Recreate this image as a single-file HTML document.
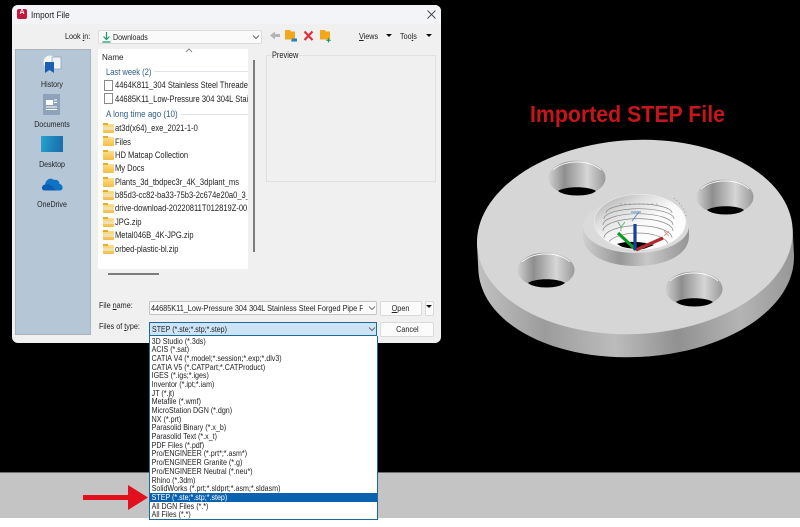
<!DOCTYPE html>
<html><head><meta charset="utf-8"><style>
html,body{margin:0;padding:0;background:#000;width:800px;height:527px;overflow:hidden}
body{position:relative;font-family:"Liberation Sans",sans-serif;color:#222;filter:blur(.3px)}
.a{position:absolute}
.t{position:absolute;white-space:nowrap;font-size:8.6px;line-height:12px;height:12px;transform:scaleX(.84);transform-origin:0 50%}
.c{text-align:center;width:74px;left:15px;font-size:8.4px;transform-origin:50% 50%}
.f{left:115px;width:158px;overflow:hidden;font-size:9px}
.fd{position:absolute;left:103px;width:11px;height:9px;background:linear-gradient(#fde08a,#f3bd45);border-radius:1px}
.fd:before{content:"";position:absolute;left:0;top:-1px;width:5px;height:2px;background:#e8a92f}
.z:after{content:"";position:absolute;left:0;right:0;top:3px;height:3px;background:#ece4c8;opacity:.8}
.doc{position:absolute;left:104px;width:7px;height:9px;border:1px solid #8a8a8a;background:#fff}
.b{position:absolute;background:#fbfbfb;border:1px solid #d9d9d9;border-radius:2px;text-align:center;font-size:8.6px;line-height:13px}
.b span{display:inline-block;transform:scaleX(.84)}
#dd{overflow:hidden;padding-top:.5px}
#dd div{height:8.7px;line-height:8.7px;padding-left:2px;font-size:8.55px;white-space:nowrap;width:276px;transform:scaleX(.83);transform-origin:0 0;box-sizing:border-box}
</style></head><body>
<div class="a" style="left:0;top:472px;width:800px;height:46px;background:#c4c4c4;border-top:1px solid #6e6e6e;box-sizing:border-box"></div>
<div class="a" style="left:0;top:518px;width:800px;height:9px;background:#fff"></div>

<svg class="a" style="left:0;top:0" width="800" height="527" viewBox="0 0 800 527">
<defs>
<linearGradient id="side" x1="0" x2="1" y1="0" y2="0"><stop offset="0" stop-color="#c0c0c0"/><stop offset=".2" stop-color="#9c9c9c"/><stop offset=".42" stop-color="#bcbcbc"/><stop offset=".62" stop-color="#919191"/><stop offset=".82" stop-color="#b4b4b4"/><stop offset="1" stop-color="#979797"/></linearGradient>
<linearGradient id="hole" x1="0" x2="1" y1="0" y2="0"><stop offset="0" stop-color="#d0d0d0"/><stop offset=".28" stop-color="#8e8e8e"/><stop offset=".68" stop-color="#d6d6d6"/><stop offset="1" stop-color="#999"/></linearGradient>
<linearGradient id="hub" x1="0" x2="1" y1="0" y2="0"><stop offset="0" stop-color="#cfcfcf"/><stop offset=".35" stop-color="#979797"/><stop offset=".6" stop-color="#c8c8c8"/><stop offset="1" stop-color="#949494"/></linearGradient>
<linearGradient id="bore" x1="0" x2=".9" y1="0" y2="1"><stop offset="0" stop-color="#a4a4a4"/><stop offset=".3" stop-color="#dcdcdc"/><stop offset=".55" stop-color="#fafafa"/><stop offset="1" stop-color="#fff"/></linearGradient>
<clipPath id="bc"><ellipse cx="640" cy="222" rx="45" ry="27"/></clipPath>
</defs>
<text x="530" y="122" fill="#c8141c" font-family="Liberation Sans,sans-serif" font-size="23" font-weight="bold" textLength="195" lengthAdjust="spacingAndGlyphs">Imported STEP File</text>

<g transform="rotate(-3 635 240)">
<path d="M477 237V262C477 316 548 357 635 357S793 316 793 262V237Z" fill="url(#side)"/>
<ellipse cx="635" cy="237" rx="158" ry="97" fill="#d6d6d6"/>
</g>
<g id="holes">
<g><ellipse cx="577" cy="178" rx="28.500" ry="17.500" fill="url(#hole)"/><path d="M558 191C565 186 589 186 596 191C590 197 565 197 558 191Z" fill="#000"/><path d="M553 170A28.500 17.500 0 0 1 601 170" stroke="#fff" stroke-width=".8" fill="none"/></g>
<g><ellipse cx="725" cy="197" rx="28.500" ry="17.500" fill="url(#hole)"/><path d="M707 210C714 205 738 205 744 210C738 216 714 216 707 210Z" fill="#000"/><path d="M701 189A28.500 17.500 0 0 1 749 189" stroke="#fff" stroke-width=".8" fill="none"/></g>
<g><ellipse cx="546" cy="270" rx="28.500" ry="17.500" fill="url(#hole)"/><path d="M528 283C535 278 558 278 565 283C558 289 535 289 528 283Z" fill="#000"/><path d="M522 262A28.500 17.500 0 0 1 570 262" stroke="#fff" stroke-width=".8" fill="none"/></g>
<g><ellipse cx="694" cy="289" rx="28.500" ry="17.500" fill="url(#hole)"/><path d="M676 302C683 297 706 297 713 302C706 308 683 308 676 302Z" fill="#000"/><path d="M670 281A28.500 17.500 0 0 1 718 281" stroke="#fff" stroke-width=".8" fill="none"/></g>
</g>
<path d="M583 226V236C583 255 607 266 636 266S689 255 689 236V226Z" fill="url(#hub)"/>
<ellipse cx="636" cy="226" rx="53" ry="27" fill="#dadada"/>
<ellipse cx="640" cy="222" rx="46" ry="28" fill="#f0f0f0"/>
<ellipse cx="640" cy="222" rx="45.500" ry="27.500" fill="url(#bore)"/>
<g clip-path="url(#bc)" fill="none" stroke="#8a8a8a" stroke-width=".7">
<path d="M606 213A33 9 0 0 1 672 213M604 219A34 10 0 0 1 674 219M603 225A34 11 0 0 1 673 225M603 231A34 12 0 0 1 673 231M604 238A33 12 0 0 1 672 238M608 245A30 12 0 0 1 668 245"/>
<path d="M617 244C625 241 640 241 654 245L636 252L624 248Z" fill="#000" stroke="none"/>
</g>
<path d="M620 204H660" stroke="#777" stroke-width=".6" stroke-dasharray="1.500 3"/>
<path d="M674 198C681 204 685 210 686 216" stroke="#888" stroke-width=".7" stroke-dasharray="1 2.500" fill="none"/>
<path d="M636 250L618 233" stroke="#0f9a24" stroke-width="3.200"/>
<path d="M636 250L663 238" stroke="#b22a30" stroke-width="3.200"/>
<path d="M635 250V224" stroke="#16409c" stroke-width="3.200"/>
<path d="M639 212L632 221M631 212H641" stroke="#5b8fc0" stroke-width="1" fill="none"/>
<path d="M618 222L621 227L625 222M621 227V231" stroke="#58a868" stroke-width=".8" fill="none"/>
<path d="M664 231L669 236M669 231L664 236" stroke="#d08a8a" stroke-width=".8"/>

<path d="M83 495H128V485L148 497.500L128 510V500H83Z" fill="#e1101c"/>
</svg>

<div class="a" style="left:12px;top:5px;width:429px;height:338px;background:#f0f0f0;border-radius:6px"></div>
<div class="a" style="left:12px;top:5px;width:429px;height:19px;background:#f3f4f8;border-radius:6px 6px 0 0"></div>

<div class="a" style="left:17px;top:9px;width:10px;height:10px;background:#c5183f;border-radius:2px;color:#fff;font-size:7px;line-height:8px;text-align:center;font-weight:bold">A</div>
<div class="t" style="left:31px;top:9px;font-size:8.800px;transform:scaleX(.93)">Import File</div>
<svg class="a" style="left:426px;top:9px" width="11" height="11"><path d="M1.500 1.500L9.500 9.500M9.500 1.500L1.500 9.500" stroke="#444" stroke-width=".9"/></svg>

<div class="t" style="left:65px;top:30px">Look <u>i</u>n:</div>
<div class="a" style="left:98px;top:30px;width:164px;height:14px;background:#fafafa;border:1px solid #dcdcdc;border-radius:2px;box-sizing:border-box"></div>
<svg class="a" style="left:101px;top:30px" width="12" height="14"><path d="M5.500 2V9M2.500 6.500L5.500 9.500L8.500 6.500M1.500 12H9.500" stroke="#1a9a6c" stroke-width="1.200" fill="none"/></svg>
<div class="t" style="left:113px;top:31px;font-size:8.400px">Downloads</div>
<svg class="a" style="left:252px;top:34px" width="8" height="6"><path d="M1 1.500L4 4.500L7 1.500" stroke="#666" fill="none"/></svg>

<svg class="a" style="left:268px;top:28px" width="70" height="16">
<path d="M2 7.500L7 3.500V6H12V9H7V11.500Z" fill="#b4b4b4"/>
<path d="M17 2H22L23 3.500H27V11.500H17Z" fill="#f2a81d"/><path d="M24 10.500L29 10.500V13.500H23Z" fill="#2b7fb8"/>
<path d="M36.500 3.500L44.500 12M44.500 3.500L36.500 12" stroke="#e0303a" stroke-width="2.200"/>
<path d="M52 2H57L58 3.500H62V11.500H52Z" fill="#f2a81d"/><path d="M60.500 10V14.500M58.300 12.300H62.700" stroke="#1a9a6c" stroke-width="1.200"/>
</svg>
<div class="t" style="left:359px;top:30px;font-size:8.600px"><u>V</u>iews</div>
<div class="a" style="left:386px;top:34px;border:3.500px solid transparent;border-top:3.500px solid #111"></div>
<div class="t" style="left:400px;top:30px;font-size:8.600px">Too<u>l</u>s</div>
<div class="a" style="left:425.500px;top:34px;border:3.500px solid transparent;border-top:3.500px solid #111"></div>

<div class="a" style="left:266px;top:55px;width:170px;height:127px;border:1px solid #e0e0e0;box-sizing:border-box"></div>
<div class="a" style="left:271px;top:52px;width:27px;height:6px;background:#f0f0f0"></div>
<div class="t" style="left:272px;top:49px;font-size:8.800px">Preview</div>

<div class="a" style="left:15px;top:49px;width:76px;height:286px;background:#b5c7d7;border:1px solid #a9b4bd;box-sizing:border-box"></div>
<svg class="a" style="left:40px;top:53px" width="24" height="24">
<circle cx="10" cy="9" r="6.500" fill="#f4f6f8"/><rect x="12" y="4" width="9" height="12" fill="#eef2f6" stroke="#8aa0b4" stroke-width=".7"/>
<path d="M5 9H14V20L9.500 17L5 20Z" fill="#1b5fb4"/>
</svg>
<div class="t c" style="top:78px">History</div>
<svg class="a" style="left:43px;top:94px" width="18" height="22"><rect width="17" height="21" fill="#8ea2bb"/><rect x="3" y="6" width="7" height="5" fill="#fff"/><path d="M11 6H14M11 8.500H14M3 13H14M3 15.500H14" stroke="#fff" stroke-width="1"/></svg>
<div class="t c" style="top:118px">Documents</div>
<div class="a" style="left:41px;top:136px;width:22px;height:16px;background:linear-gradient(100deg,#2aa4cc,#1c7fb6 60%,#1a6ca8)"></div>
<div class="t c" style="top:158px">Desktop</div>
<svg class="a" style="left:41px;top:176px" width="23" height="16"><path d="M4 14.500C0 14.500 0 9 4 8.500C5 3 10 1 13 4C16 3 18.500 5 18.500 8C22 8 23 14.500 19 14.500Z" fill="#0f72c4"/><path d="M4 14.500C0 14.500 0 9.500 4 9C7 7 10 9 13 12L15 14.500Z" fill="#0a5fb0"/></svg>
<div class="t c" style="top:198px">OneDrive</div>

<div class="a" style="left:98px;top:49px;width:150px;height:220px;background:#fff"></div>
<svg class="a" style="left:185px;top:48px" width="8" height="5"><path d="M1 4L4 1L7 4" stroke="#888" fill="none"/></svg>
<div class="t" style="left:102px;top:51px;font-size:8.600px;transform:scaleX(.94)">Name</div>
<div class="t" style="left:106px;top:66px;font-size:8.800px;color:#2f5d8a;transform:scaleX(.86)">Last week (2)</div>
<div class="a" style="left:154px;top:71px;width:94px;height:1px;background:#dfe3e8"></div>
<div class="doc" style="top:80px"></div>
<div class="t f" style="top:79px">4464K811_304 Stainless Steel Threaded</div>
<div class="doc" style="top:93px"></div>
<div class="t f" style="top:93px">44685K11_Low-Pressure 304 304L Stainless</div>
<div class="t" style="left:106px;top:108px;font-size:8.800px;color:#2f5d8a;transform:scaleX(.91)">A long time ago (10)</div>
<div class="a" style="left:181px;top:114px;width:67px;height:1px;background:#dfe3e8"></div>

<div class="fd z" style="top:124px"></div><div class="t f" style="top:122px">at3d(x64)_exe_2021-1-0</div>
<div class="fd" style="top:137px"></div><div class="t f" style="top:135.500px">Files</div>
<div class="fd" style="top:151px"></div><div class="t f" style="top:149px">HD Matcap Collection</div>
<div class="fd" style="top:164px"></div><div class="t f" style="top:162px">My Docs</div>
<div class="fd" style="top:178px"></div><div class="t f" style="top:175.500px">Plants_3d_tbdpec3r_4K_3dplant_ms</div>
<div class="fd z" style="top:191px"></div><div class="t f" style="top:189px">b85d3-cc82-ba33-75b3-2c674e20a0_3_</div>
<div class="fd z" style="top:204px"></div><div class="t f" style="top:202px">drive-download-20220811T012819Z-001</div>
<div class="fd z" style="top:218px"></div><div class="t f" style="top:216px">JPG.zip</div>
<div class="fd z" style="top:231px"></div><div class="t f" style="top:229px">Metal046B_4K-JPG.zip</div>
<div class="fd z" style="top:245px"></div><div class="t f" style="top:243px">orbed-plastic-bl.zip</div>

<div class="a" style="left:253px;top:60px;width:1.500px;height:192px;background:#7d7d7d"></div>
<div class="a" style="left:108px;top:273px;width:51px;height:1.500px;background:#7d7d7d"></div>

<div class="t" style="left:99px;top:299px">File <u>n</u>ame:</div>
<div class="a" style="left:149px;top:301px;width:228px;height:14px;background:#fafafa;border:1px solid #c4c4c4;border-radius:2px;box-sizing:border-box"></div>
<div class="t" style="left:151px;top:302px;width:242px;overflow:hidden;font-size:8.350px;transform:scaleX(.875)">44685K11_Low-Pressure 304 304L Stainless Steel Forged Pipe Flange</div>
<svg class="a" style="left:368px;top:305px" width="8" height="6"><path d="M1 1.500L4 4.500L7 1.500" stroke="#777" fill="none"/></svg>
<div class="b" style="left:380px;top:301px;width:40px;height:13px"><span><u>O</u>pen</span></div>
<div class="b" style="left:425px;top:301px;width:7px;height:13px"></div>
<div class="a" style="left:425.500px;top:305px;border:3.500px solid transparent;border-top:3.500px solid #111"></div>

<div class="t" style="left:99px;top:320px">Files of <u>t</u>ype:</div>
<div class="a" style="left:149px;top:322px;width:228px;height:14px;background:#cde4f7;border:1px solid #1b6a98;box-sizing:border-box"></div>
<div class="t" style="left:152px;top:323px;font-size:8.400px">STEP (*.ste;*.stp;*.step)</div>
<svg class="a" style="left:368px;top:326px" width="8" height="6"><path d="M1 1.500L4 4.500L7 1.500" stroke="#667" fill="none"/></svg>
<div class="b" style="left:380px;top:322px;width:52px;height:13px"><span>Cancel</span></div>

<div id="dd" class="a" style="left:149px;top:336px;width:229px;height:184px;background:#fff;border:1px solid #1b6a98;box-sizing:border-box;border-top:0;color:#222">
<div>3D Studio (*.3ds)</div>
<div>ACIS (*.sat)</div>
<div>CATIA V4 (*.model;*.session;*.exp;*.dlv3)</div>
<div>CATIA V5 (*.CATPart;*.CATProduct)</div>
<div>IGES (*.igs;*.iges)</div>
<div>Inventor (*.ipt;*.iam)</div>
<div>JT (*.jt)</div>
<div>Metafile (*.wmf)</div>
<div>MicroStation DGN (*.dgn)</div>
<div>NX (*.prt)</div>
<div>Parasolid Binary (*.x_b)</div>
<div>Parasolid Text (*.x_t)</div>
<div>PDF Files (*.pdf)</div>
<div>Pro/ENGINEER (*.prt*;*.asm*)</div>
<div>Pro/ENGINEER Granite (*.g)</div>
<div>Pro/ENGINEER Neutral (*.neu*)</div>
<div>Rhino (*.3dm)</div>
<div>SolidWorks (*.prt;*.sldprt;*.asm;*.sldasm)</div>
<div style="background:#0a62b0;color:#fff">STEP (*.ste;*.stp;*.step)</div>
<div>All DGN Files (*.*)</div>
<div>All Files (*.*)</div>
</div>
</body></html>
